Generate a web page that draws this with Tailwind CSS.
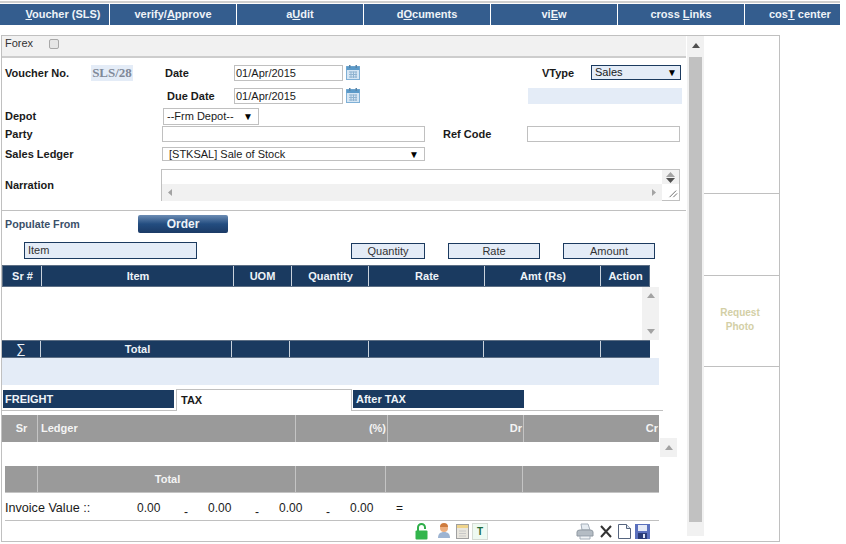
<!DOCTYPE html>
<html lang="en">
<head>
  <meta charset="UTF-8" />
  <title>Sales Voucher</title>
  <script src="https://cdn.jsdelivr.net/npm/@tailwindcss/browser@4"></script>
</head>
<body class="bg-white">
<div class="w-[846px] h-[544px] overflow-hidden font-['Liberation_Sans',Arial,sans-serif] text-[11px] text-[#1a1a1a]">
  <!-- top menu -->
  <div class="mt-px h-[2px] w-[840px] bg-[#cfcfcf]"></div>
  <nav class="mt-px flex h-[21px] w-[840px] bg-[#345d8e] text-[11px] font-bold text-[#eef3f8] leading-[21px] text-center">
    <div class="w-[109px] pl-[17px]"><u>V</u>oucher (SLS)</div>
    <div class="w-[127px] border-l border-white">verify/<u>A</u>pprove</div>
    <div class="w-[127px] border-l border-white">a<u>U</u>dit</div>
    <div class="w-[127px] border-l border-white">d<u>O</u>cuments</div>
    <div class="w-[127px] border-l border-white">vi<u>E</u>w</div>
    <div class="w-[127px] border-l border-white">cross <u>L</u>inks</div>
    <div class="w-[96px] border-l border-white pl-[24px] text-left">cos<u>T</u> center</div>
  </nav>

  <div class="mt-[10px] ml-px flex h-[507px] w-[779px] border border-[#c0c0c0]">
    <!-- form column -->
    <div class="w-[684px] shrink-0">
      <div class="flex h-[22px] items-start border-b-2 border-[#cdcdcd] bg-[#f1f1f1] pl-[3px] pt-px text-[#333]">
        <span class="w-[44px] leading-[13px]">Forex</span>
        <input type="checkbox" class="mt-[2px] h-[10px] w-[10px] appearance-none rounded-[2px] border border-[#a8a8a8] bg-[#e6e6e6]" />
      </div>

      <div class="flex h-[30px] items-start pt-[7px]">
        <span class="ml-[3px] w-[86px] font-bold leading-[16px]">Voucher No.</span>
        <span class="w-[42px] bg-[#e4ecf7] text-center font-bold leading-[16px] text-[13px] text-[#808898] font-['Liberation_Serif',serif]">SLS/28</span>
        <span class="ml-[32px] w-[69px] font-bold leading-[16px]">Date</span>
        <div class="h-[16px] w-[109px] border border-[#c0c0c0] pl-px leading-[14px]">01/Apr/2015</div>
        <svg class="ml-[3px] h-[15px] w-[14px]" viewBox="0 0 14 15"><rect x="0.5" y="1.5" width="13" height="13" fill="#d6e6f4" stroke="#7fb0d6"/><rect x="0.5" y="1.5" width="13" height="3.5" fill="#5b9ac9"/><rect x="3" y="0" width="1.5" height="3" fill="#5a84a6"/><rect x="9.5" y="0" width="1.5" height="3" fill="#5a84a6"/><path d="M3 7h8M3 9.5h8M3 12h8M5 6.5v6.5M7.5 6.5v6.5M10 6.5v6.5" stroke="#8fb3d0"/></svg>
        <span class="ml-[182px] w-[49px] font-bold leading-[16px]">VType</span>
        <div class="flex h-[15px] w-[90px] items-center justify-between border border-[#1b3a5f] bg-[#e4ecf7] pl-[3px] pr-[3px]"><span>Sales</span><span class="text-[10px] text-black">▼</span></div>
      </div>

      <div class="flex h-[20px] items-start">
        <span class="ml-[165px] w-[67px] font-bold leading-[16px]">Due Date</span>
        <div class="h-[16px] w-[109px] border border-[#c0c0c0] pl-px leading-[14px]">01/Apr/2015</div>
        <svg class="ml-[3px] h-[15px] w-[14px]" viewBox="0 0 14 15"><rect x="0.5" y="1.5" width="13" height="13" fill="#d6e6f4" stroke="#7fb0d6"/><rect x="0.5" y="1.5" width="13" height="3.5" fill="#5b9ac9"/><rect x="3" y="0" width="1.5" height="3" fill="#5a84a6"/><rect x="9.5" y="0" width="1.5" height="3" fill="#5a84a6"/><path d="M3 7h8M3 9.5h8M3 12h8M5 6.5v6.5M7.5 6.5v6.5M10 6.5v6.5" stroke="#8fb3d0"/></svg>
        <div class="ml-[168px] h-[16px] w-[154px] bg-[#e4ecf7]"></div>
      </div>

      <div class="flex h-[18px] items-start">
        <span class="ml-[3px] w-[158px] font-bold leading-[16px]">Depot</span>
        <div class="flex h-[17px] w-[96px] items-center justify-between border border-[#c0c0c0] pl-[3px] pr-[5px]"><span>--Frm Depot--</span><span class="text-[10px] text-black">▼</span></div>
      </div>

      <div class="flex h-[17px] items-start">
        <span class="ml-[3px] w-[157px] font-bold leading-[16px]">Party</span>
        <div class="h-[16px] w-[263px] border border-[#c0c0c0]"></div>
        <span class="ml-[18px] w-[84px] font-bold leading-[16px]">Ref Code</span>
        <div class="h-[16px] w-[153px] border border-[#c0c0c0]"></div>
      </div>

      <div class="mt-[4px] flex h-[14px] items-center">
        <span class="ml-[3px] w-[157px] font-bold">Sales Ledger</span>
        <div class="flex h-[14px] w-[263px] items-center justify-between border border-[#c0c0c0] pl-[6px] pr-[5px]"><span>[STKSAL] Sale of Stock</span><span class="text-[10px] text-black">▼</span></div>
      </div>

      <div class="mt-[8px] flex h-[32px] items-start">
        <span class="ml-[3px] mt-[9px] w-[156px] font-bold leading-[14px]">Narration</span>
        <div class="flex h-[32px] w-[519px] flex-col border-l border-t border-[#c0c0c0]">
          <div class="flex h-[14px] justify-end">
            <div class="flex w-[18px] flex-col items-center justify-center gap-[1px] border-r border-[#c0c0c0] bg-[#f1f1f1] text-[#666]">
              <svg class="h-[5px] w-[9px]" viewBox="0 0 9 5"><path d="M4.5 0L9 5H0z" fill="#a3a3a3"/></svg>
              <svg class="h-[5px] w-[9px]" viewBox="0 0 9 5"><path d="M0 0h9L4.5 5z" fill="#505050"/></svg>
            </div>
          </div>
          <div class="flex h-[17px]">
            <div class="flex flex-1 items-center justify-between bg-[#f1f1f1] px-[6px]">
              <svg class="h-[7px] w-[4px]" viewBox="0 0 4 7"><path d="M4 0v7L0 3.5z" fill="#a3a3a3"/></svg>
              <svg class="h-[7px] w-[4px]" viewBox="0 0 4 7"><path d="M0 0v7l4-3.500z" fill="#a3a3a3"/></svg>
            </div>
            <svg class="h-[17px] w-[18px] border-r border-b border-[#c0c0c0]" viewBox="0 0 18 17"><path d="M8 14L15 7M12 14l4-4" stroke="#666"/></svg>
          </div>
        </div>
      </div>

      <div class="mt-[9px] border-b border-[#c0c0c0]"></div>

      <div class="mt-[4px] flex h-[18px] items-center">
        <span class="ml-[3px] w-[133px] text-[10.7px] font-bold text-[#3b5069]">Populate From</span>
        <button class="h-[18px] w-[90px] rounded-[2px] bg-gradient-to-b from-[#6c8db4] via-[#234d80] to-[#1b3a66] text-[12px] font-bold text-[#eef3f8]">Order</button>
      </div>

      <div class="mt-[9px] flex h-[17px] items-start text-[#333]">
        <div class="ml-[22px] h-[17px] w-[173px] border border-[#1b3a5f] bg-[#e4ecf7] pl-[3px] leading-[15px]">Item</div>
        <div class="ml-[154px] mt-px h-[16px] w-[74px] border border-[#1b3a5f] bg-[#e4ecf7] text-center leading-[14px]">Quantity</div>
        <div class="ml-[23px] mt-px h-[16px] w-[92px] border border-[#1b3a5f] bg-[#e4ecf7] text-center leading-[14px]">Rate</div>
        <div class="ml-[23px] mt-px h-[16px] w-[92px] border border-[#1b3a5f] bg-[#e4ecf7] text-center leading-[14px]">Amount</div>
      </div>

      <!-- item grid -->
      <div class="mt-[6px] flex h-[22px] w-[648px] border border-[#5d6f85] bg-[#1a3a60] text-center font-bold leading-[20px] text-[#eef3f8]">
        <div class="w-[38px] pl-px">Sr #</div>
        <div class="w-[192px] border-l border-[#c9d2dc] pl-px">Item</div>
        <div class="w-[58px] border-l border-[#c9d2dc]">UOM</div>
        <div class="w-[77px] border-l border-[#c9d2dc] pl-px">Quantity</div>
        <div class="w-[116px] border-l border-[#c9d2dc] pl-px">Rate</div>
        <div class="w-[116px] border-l border-[#c9d2dc] pl-px">Amt (Rs)</div>
        <div class="w-[49px] border-l border-[#c9d2dc] pl-px">Action</div>
      </div>
      <div class="flex h-[53px] w-[657px] justify-end">
        <div class="flex w-[17px] flex-col items-center justify-between bg-[#f1f1f1] py-[6px]">
          <svg class="h-[5px] w-[8px]" viewBox="0 0 8 5"><path d="M4 0l4 5H0z" fill="#a3a3a3"/></svg>
          <svg class="h-[5px] w-[8px]" viewBox="0 0 8 5"><path d="M0 0h8L4 5z" fill="#a3a3a3"/></svg>
        </div>
      </div>
      <div class="flex h-[18px] w-[648px] border-y border-[#5d6f85] bg-[#1a3a60] text-center font-bold leading-[16px] text-[#eef3f8]">
        <div class="w-[38px] text-[13px] font-normal">∑</div>
        <div class="w-[191px] border-l border-[#c9d2dc] pl-[3px]">Total</div>
        <div class="w-[58px] border-l border-[#c9d2dc]"></div>
        <div class="w-[79px] border-l border-[#c9d2dc]"></div>
        <div class="w-[115px] border-l border-[#c9d2dc]"></div>
        <div class="w-[117px] border-l border-[#c9d2dc]"></div>
        <div class="w-[50px] border-l border-[#c9d2dc]"></div>
      </div>
      <div class="h-[27px] w-[657px] bg-[#e4ecf7]"></div>

      <!-- tabs -->
      <div class="mt-[4px] flex h-[22px] w-[661px] items-start border-b border-[#c0c0c0] font-bold">
        <div class="ml-px mt-px h-[18px] w-[171px] bg-[#1a3a60] pl-[2px] leading-[18px] text-[#eef3f8]">FREIGHT</div>
        <div class="relative ml-[2px] h-[22px] w-[176px] border-x border-t border-[#c0c0c0] bg-white pl-[4px] pt-[2px] leading-[16px]">TAX</div>
        <div class="ml-px mt-px h-[18px] w-[171px] bg-[#1a3a60] pl-[3px] leading-[18px] text-[#eef3f8]">After TAX</div>
      </div>

      <div class="flex items-start">
        <div class="w-[657px]">
          <div class="mt-[4px] flex h-[27px] bg-[#9a9a9a] font-bold leading-[27px] text-[#f4f4f4]">
            <div class="w-[35px] pl-[4px] text-center">Sr</div>
            <div class="w-[258px] border-l border-[#c4c4c4] pl-[3px]">Ledger</div>
            <div class="w-[92px] border-l border-[#c4c4c4] pr-[1px] text-right">(%)</div>
            <div class="w-[136px] border-l border-[#c4c4c4] pr-[1px] text-right">Dr</div>
            <div class="w-[136px] border-l border-[#c4c4c4] pr-[1px] text-right">Cr</div>
          </div>
          <div class="ml-[3px] mt-[24px] flex h-[27px] border-b border-[#c4c4c4] bg-[#9a9a9a] text-center font-bold leading-[27px] text-[#f4f4f4]">
            <div class="w-[32px]"></div>
            <div class="w-[258px] border-l border-[#c4c4c4] pl-[2px]">Total</div>
            <div class="w-[90px] border-l border-[#c4c4c4]"></div>
            <div class="w-[137px] border-l border-[#c4c4c4]"></div>
            <div class="w-[137px] border-l border-[#c4c4c4]"></div>
          </div>
        </div>
        <div class="ml-px mt-[27px] flex h-[19px] w-[17px] items-center justify-center bg-[#f1f1f1]">
          <svg class="h-[5px] w-[8px]" viewBox="0 0 8 5"><path d="M4 0l4 5H0z" fill="#a3a3a3"/></svg>
        </div>
      </div>

      <div class="ml-[3px] flex h-[27px] w-[654px] items-center pt-[3px] text-[12px]">
        <span class="w-[132px] text-[12.6px]">Invoice Value ::</span>
        <span class="w-[47px]">0.00</span><span class="w-[24px] pt-[7px]">-</span>
        <span class="w-[47px]">0.00</span><span class="w-[24px] pt-[7px]">-</span>
        <span class="w-[47px]">0.00</span><span class="w-[24px] pt-[7px]">-</span>
        <span class="w-[46px]">0.00</span><span>=</span>
      </div>
      <div class="ml-[3px] flex h-[21px] w-[654px] items-center border-t border-[#c0c0c0]">
        <svg class="ml-[410px] h-[17px] w-[13px]" viewBox="0 0 13 17"><path d="M3 8V4.500a3.500 3.500 0 0 1 7 0V6" fill="none" stroke="#2fae4a" stroke-width="2"/><rect x="0.500" y="7.500" width="12" height="9" rx="1" fill="#33b54c"/></svg>
        <svg class="ml-[9px] h-[16px] w-[14px]" viewBox="0 0 14 16"><circle cx="7" cy="5" r="4" fill="#ecae7e"/><path d="M3 4a4 4 0 0 1 8 0z" fill="#cf7c3e"/><path d="M1 15c0-4 2-6 6-6s6 2 6 6z" fill="#9db4d2"/></svg>
        <svg class="ml-[5px] h-[15px] w-[13px]" viewBox="0 0 13 15"><rect x="0.500" y="0.500" width="12" height="14" fill="#e9e6de" stroke="#a0a0a0"/><rect x="1" y="1" width="11" height="3" fill="#efd48c"/><path d="M3 7h7M3 9.500h7M3 12h7" stroke="#c8c8c8"/></svg>
        <div class="ml-[3px] h-[17px] w-[16px] border border-[#d5dcd5] bg-[#eefaf2] text-center text-[10px] font-bold leading-[15px] text-[#1f6b3a]">T</div>
        <svg class="ml-[88px] h-[17px] w-[18px]" viewBox="0 0 18 17"><path d="M5 1h7l2 6H6z" fill="#e6ecf2" stroke="#a5afba"/><path d="M1 9q0-2 3-2h10q3 0 3 2v4H1z" fill="#b4bcc4" stroke="#8f98a1"/><path d="M4 13h10v3H4z" fill="#eef1f4" stroke="#a5afba"/></svg>
        <svg class="ml-[6px] h-[13px] w-[12px]" viewBox="0 0 12 13"><path d="M1 1l10 11M11 1L1 12" stroke="#333" stroke-width="2"/></svg>
        <svg class="ml-[6px] h-[15px] w-[13px]" viewBox="0 0 13 15"><path d="M0.500 0.500h8l4 4v10h-12z" fill="#fff" stroke="#56657f"/><path d="M8.500 0.500v4h4" fill="#dfe6f0" stroke="#56657f"/></svg>
        <svg class="ml-[4px] h-[15px] w-[15px]" viewBox="0 0 15 15"><rect width="15" height="15" fill="#5a70bd"/><rect x="3" y="1" width="9" height="6" fill="#e6ebf7"/><rect x="3" y="9" width="9" height="6" fill="#2a3c78"/><rect x="8" y="10" width="2" height="4" fill="#dfe6f5"/></svg>
      </div>
    </div>

    <!-- page scrollbar -->
    <div class="ml-px flex h-[500px] w-[17px] shrink-0 flex-col items-center bg-[#f1f1f1]">
      <div class="flex h-[21px] items-center pb-[2px]">
        <svg class="h-[5px] w-[8px]" viewBox="0 0 8 5"><path d="M4 0l4 5H0z" fill="#505050"/></svg>
      </div>
      <div class="h-[465px] w-[13px] bg-[#c1c1c1]"></div>
    </div>

    <!-- photo panel -->
    <div class="flex-1">
      <div class="h-[158px] border-b border-[#c0c0c0]"></div>
      <div class="h-[82px] border-b border-[#c0c0c0]"></div>
      <div class="flex h-[91px] items-center justify-center border-b border-[#c0c0c0] pr-[3px] pb-[2px] text-center text-[10px] font-bold leading-[14px] text-[#d3cfa6]">Request<br />Photo</div>
    </div>
  </div>
</div>
</body>
</html>
